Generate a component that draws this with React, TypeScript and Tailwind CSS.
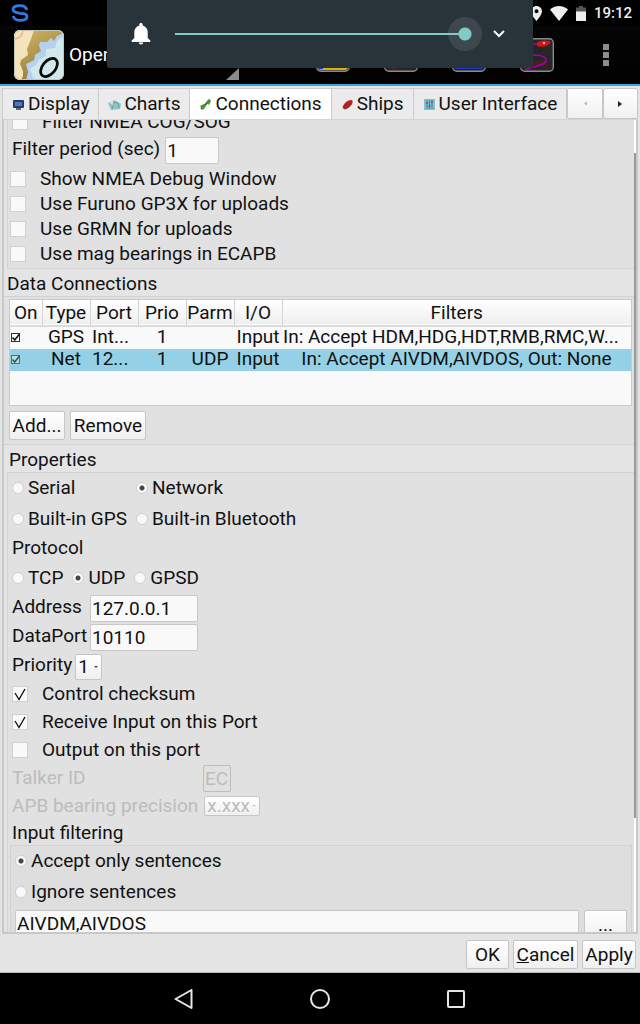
import clsx from "clsx";
import type { ReactNode } from "react";

const connections = [
  { type: "GPS", port: "Int...", prio: "1", parm: "", io: "Input", filters: "In: Accept HDM,HDG,HDT,RMB,RMC,W..." },
  { type: "Net", port: "12...", prio: "1", parm: "UDP", io: "Input", filters: "In: Accept AIVDM,AIVDOS, Out: None" },
];

const raised = "rounded-xs border border-[#c6c6c6] bg-linear-to-b from-white to-[#f0f0f0]";
const field = "h-[27px] rounded-xs border border-[#c8c8c8] bg-[#f9f9f9] px-px";

function Check({ label, checked = false, className }: { label: string; checked?: boolean; className?: string }) {
  return (
    <label className={clsx("flex items-center gap-3.5", className)}>
      <span className="grid size-4">
        <input
          type="checkbox"
          defaultChecked={checked}
          className="peer col-start-1 row-start-1 size-4 appearance-none border border-[#d0d0d0] bg-[#f9f9f9]"
        />
        <svg viewBox="0 0 16 16" className="pointer-events-none invisible col-start-1 row-start-1 size-4 peer-checked:visible">
          <path d="M3 7l4 6.500L13 3" fill="none" stroke="#111" strokeWidth="1.400" />
        </svg>
      </span>
      {label}
    </label>
  );
}

function Radio({ name, label, checked = false, className }: { name: string; label: string; checked?: boolean; className?: string }) {
  return (
    <label className={clsx("flex items-center gap-1 whitespace-nowrap", className)}>
      <input
        type="radio"
        name={name}
        defaultChecked={checked}
        className="size-3 appearance-none rounded-full border border-[#cfcfcf] bg-[#f9f9f9] checked:bg-[radial-gradient(circle,#444_0_2px,#f9f9f9_3px)]"
      />
      {label}
    </label>
  );
}

function RowCheck({ label, tinted = false }: { label: string; tinted?: boolean }) {
  return (
    <label className="grid size-[10px]">
      <input
        type="checkbox"
        defaultChecked
        aria-label={label}
        className={clsx(
          "peer col-start-1 row-start-1 size-[9px] appearance-none border",
          tinted ? "border-[#49707d] bg-[#b9dce8]" : "border-[#333] bg-white",
        )}
      />
      <svg viewBox="0 0 10 10" className="pointer-events-none invisible col-start-1 row-start-1 size-[10px] peer-checked:visible">
        <path d="M1.500 4.500l2.200 2.500L8.500 1" fill="none" stroke={tinted ? "#36525c" : "#111"} strokeWidth="1.500" />
      </svg>
    </label>
  );
}

function Tab({ label, active = false, children }: { label: string; active?: boolean; children: ReactNode }) {
  return (
    <button
      type="button"
      role="tab"
      aria-selected={active}
      className={clsx(
        "flex items-center gap-[3px] border-t border-r border-[#cccccc] px-[9px] whitespace-nowrap",
        active ? "bg-white" : "bg-[#ebebeb]",
      )}
    >
      <svg viewBox="0 0 13 13" className="size-[13px]">
        {children}
      </svg>
      {label}
    </button>
  );
}

function ChartLogo() {
  return (
    <svg viewBox="0 0 50 50" className="size-[50px]">
      <defs>
        <linearGradient id="land" x1="0" y1="0" x2=".6" y2="1">
          <stop offset="0" stopColor="#d7bb6b" />
          <stop offset="1" stopColor="#8f7833" />
        </linearGradient>
        <clipPath id="tile">
          <rect width="50" height="50" rx="6" />
        </clipPath>
      </defs>
      <g clipPath="url(#tile)">
        <rect width="50" height="50" fill="#d2e9ec" />
        <path d="M50 0v6l-7 5-2 7-9 1v7l-7 3-2 5-7 5 2 5 2 6H0V0z" fill="#b5d0f0" />
        <path d="M50 0l-3 4-4 2-3 5-3-3-4 4-7 0-1 4 2 5-6 4-1 5-8 4 2 8-2 8H0V0z" fill="url(#land)" />
        <path d="M20 0l-3 9-4 10 1 6-7 5-1 4 3 7v5l-2 4H0V0z" fill="#f3e4bd" />
        <path d="M0 9c5 0 9-4 9-9" fill="none" stroke="#f0b49c" strokeWidth="1.500" />
        <ellipse cx="35" cy="37.500" rx="6.500" ry="10.500" transform="rotate(40 35 37.500)" fill="none" stroke="#0a0a0a" strokeWidth="2.700" />
      </g>
      <rect x=".5" y=".5" width="49" height="49" rx="6" fill="none" stroke="#c9c4b4" />
    </svg>
  );
}

function ToolTile({ children }: { children: ReactNode }) {
  return (
    <button type="button" className="size-[34px]">
      <svg viewBox="0 0 34 34" className="size-[34px]">
        <rect x=".7" y=".7" width="32.600" height="32.600" rx="4" fill="#262626" stroke="#8a8a8a" strokeWidth="1.400" />
        {children}
      </svg>
    </button>
  );
}

function VolumePanel() {
  return (
    <div className="absolute top-0 left-1/2 flex h-[68px] w-[426px] -translate-x-1/2 items-center rounded-b-xs bg-[#29333a] pr-7 pl-6">
      <svg viewBox="0 0 20 22" className="h-[22px] w-5 fill-white">
        <path d="M10 0c1 0 1.700.7 1.700 1.600v.9c3 .8 5 3.400 5 6.500v6l2.600 2.500V19H.7v-1.500L3.300 15V9c0-3.100 2-5.700 5-6.500v-.9C8.300.7 9 0 10 0zM7.800 19.500h4.400c0 1.300-1 2-2.200 2s-2.200-.7-2.200-2z" />
      </svg>
      <label className="ml-6 flex-1">
        <span className="sr-only">Volume</span>
        <input
          type="range"
          defaultValue={100}
          className="block h-[34px] w-full appearance-none bg-[linear-gradient(#80cbc4,#80cbc4)] bg-size-[calc(100%-17px)_2px] bg-left bg-no-repeat [&::-webkit-slider-thumb]:size-[34px] [&::-webkit-slider-thumb]:appearance-none [&::-webkit-slider-thumb]:rounded-full [&::-webkit-slider-thumb]:bg-[linear-gradient(#80cbc4,#80cbc4),radial-gradient(circle,#80cbc4_0_6px,#3d474d_7px)] [&::-webkit-slider-thumb]:bg-size-[14px_2px,100%_100%] [&::-webkit-slider-thumb]:bg-left [&::-webkit-slider-thumb]:bg-no-repeat"
        />
      </label>
      <button type="button" aria-label="Expand" className="ml-[11px]">
        <svg viewBox="0 0 12 8" className="h-2 w-3">
          <path d="M1 1l5 5 5-5" fill="none" stroke="#fff" strokeWidth="2" />
        </svg>
      </button>
    </div>
  );
}

function TopBars() {
  return (
    <header className="relative border-b-2 border-[#2fa8d8] bg-black text-white">
      <div className="flex h-[26px] items-center justify-between pr-2 pl-[11px]">
        <svg viewBox="0 0 18 18" className="size-[18px]" fill="none" stroke="#3478e5" strokeWidth="2.800">
          <path d="M15.800 6C15 3 12.500 1.600 9 1.600 5 1.600 2 3 2 5.500c0 2 2 2.700 5 3.300l5 1.200" />
          <path d="M2.200 12c.8 3 3.300 4.400 6.800 4.400 4 0 7-1.400 7-3.900 0-2-2-2.700-5-3.300" />
        </svg>
        <div className="flex items-center">
          <svg viewBox="0 0 11 15" className="h-[15px] w-[11px]">
            <path d="M5.500 0C2.500 0 0 2.300 0 5.300 0 9 5.500 15 5.500 15S11 9 11 5.300C11 2.300 8.500 0 5.500 0zm0 7.300a2 2 0 110-4 2 2 0 010 4z" fill="#eee" />
          </svg>
          <svg viewBox="0 0 18 15" className="ml-2 h-[15px] w-[18px]">
            <path d="M9 15L0 3.500C2.500 1.200 5.500 0 9 0s6.500 1.200 9 3.500z" fill="#eee" />
          </svg>
          <svg viewBox="0 0 10 15" className="ml-2 h-[15px] w-[10px]">
            <path d="M3 0h4v1.500h3V6H0V1.500h3z" fill="#555" />
            <path d="M0 5.500h10V15H0z" fill="#eee" />
          </svg>
          <span className="ml-2 text-[15px] font-medium text-[#eee]">19:12</span>
        </div>
      </div>
      <div className="flex h-[58px] items-center bg-linear-to-b from-[#050505] to-[#010101] pl-[14px]">
        <ChartLogo />
        <h1 className="ml-[5px] w-[157px]">OpenCPN</h1>
        <svg viewBox="0 0 13 12" className="mb-[-38px] h-3 w-[13px]">
          <path d="M13 0v12H0z" fill="#8a8a8a" />
        </svg>
        <div className="ml-auto flex items-center gap-[34px] pr-[49px]">
          <ToolTile>
            <path d="M2 20h30v9q0 3-3 3H5q-3 0-3-3z" fill="#e0b000" />
            <path d="M1 27h6v4H3z" fill="#1d2fd0" />
          </ToolTile>
          <ToolTile>
            <circle cx="10" cy="30" r="1" fill="#c01010" />
          </ToolTile>
          <ToolTile>
            <path d="M3 29h28v2H3z" fill="#1e35c8" />
          </ToolTile>
          <ToolTile>
            <path d="M10 23h17v4H10z" fill="#55181a" />
            <path d="M11 7l8-2M5 32c8-4 21-4 21-10 0-4-8-5-15-5" fill="none" stroke="#a000a8" strokeWidth="1.500" />
            <path d="M17 5c3-3 10-3 14-1-2 4-9 6-14 4z" fill="#d41515" />
            <circle cx="24" cy="5" r="1" fill="#fff" />
          </ToolTile>
        </div>
        <button type="button" aria-label="More options" className="mr-[31px] grid gap-[2px]">
          <span className="size-[6px] bg-[#8c8c8c]" />
          <span className="size-[6px] bg-[#8c8c8c]" />
          <span className="size-[6px] bg-[#8c8c8c]" />
        </button>
      </div>
      <VolumePanel />
    </header>
  );
}

function Tabs() {
  return (
    <div role="tablist" className="mx-[2px] mt-[2px] flex h-[31px] border-l border-[#cccccc]">
      <Tab label="Display">
        <rect x="1" y="2" width="11" height="8" rx="1" fill="#283a70" />
        <rect x="3" y="4" width="7" height="4" fill="#5577bb" />
        <rect x="4" y="10" width="5" height="2" fill="#666" />
      </Tab>
      <Tab label="Charts">
        <path d="M0 5l3-1 3-2 4 2 3 2-1 5-9 1z" fill="#8fc3cf" />
        <path d="M2 5l3-2 1 5z" fill="#eee6b8" />
        <path d="M4 11l2-7 4 1 1 5" fill="none" stroke="#5596a5" strokeWidth=".8" />
      </Tab>
      <Tab label="Connections" active>
        <path d="M2 11l9-9" stroke="#555" strokeWidth="2" />
        <path d="M1 8l4-2 2 2-3 4zM7 4l3-3 2 2-2 4z" fill="#3f9a2c" />
      </Tab>
      <Tab label="Ships">
        <path d="M2 8c2-4 5-6 8-6 2 0 2 2 1 4-2 3-5 5-7 5-2 0-3-1-2-3z" fill="#c21d1d" />
        <path d="M3 11c3 0 6-3 8-6" fill="none" stroke="#6a4040" />
      </Tab>
      <Tab label="User Interface">
        <rect x="1" y="1" width="11" height="11" fill="#79c3d6" />
        <path d="M4 2v9M6.500 2v9M9 2v9" stroke="#2f6475" strokeWidth=".7" />
        <path d="M3 5h2M5.500 8h2M8 4h2" stroke="#c33" strokeWidth="1.500" />
      </Tab>
      <button type="button" aria-label="Previous tabs" className={clsx(raised, "grid flex-1 place-items-center")}>
        <svg viewBox="0 0 4 6" className="h-[5px] w-[3px] fill-[#bbb]">
          <path d="M4 0v6L0 3z" />
        </svg>
      </button>
      <button type="button" aria-label="Next tabs" className={clsx(raised, "grid flex-1 place-items-center")}>
        <svg viewBox="0 0 4 6" className="h-[6px] w-[4px] fill-[#222]">
          <path d="M0 0v6l4-3z" />
        </svg>
      </button>
    </div>
  );
}

function ConnectionsTable() {
  return (
    <div className="h-[107px] border border-[#cacaca] bg-[#f9f9f9]">
      <table className="w-full table-fixed text-center whitespace-nowrap">
        <colgroup>
          <col className="w-8" />
          <col className="w-12" />
          <col className="w-12" />
          <col className="w-12" />
          <col className="w-12" />
          <col className="w-12" />
          <col />
        </colgroup>
        <thead>
          <tr className="h-[26px] border-b-2 border-[#dcdcdc] bg-linear-to-b from-white to-[#efefef]">
            {["On", "Type", "Port", "Prio", "Parm", "I/O", "Filters"].map((h) => (
              <th key={h} className="border-r border-[#d4d4d4] p-0 leading-[22px] font-normal last:border-r-0">
                {h}
              </th>
            ))}
          </tr>
        </thead>
        <tbody>
          {connections.map((c, i) => (
            <tr key={c.type} className={clsx("h-[22px] leading-5", i === 1 && "bg-[#94d1e6]")}>
              <td className="p-0 pl-px">
                <RowCheck label={`Enable ${c.type}`} tinted={i === 1} />
              </td>
              <td className="p-0 pb-[2px]">{c.type}</td>
              <td className="p-0 pb-[2px] pl-[2px] text-left">{c.port}</td>
              <td className="p-0 pb-[2px]">{c.prio}</td>
              <td className="p-0 pb-[2px]">{c.parm}</td>
              <td className="p-0 pb-[2px]">{c.io}</td>
              <td className={clsx("p-0 pb-[2px]", c.filters.endsWith("...") && "pl-px text-left")}>{c.filters}</td>
            </tr>
          ))}
        </tbody>
      </table>
    </div>
  );
}

export default function App() {
  return (
    <div className="flex h-screen flex-col overflow-hidden bg-[#e4e4e4] font-['Roboto',sans-serif] text-[19px] leading-6 text-[#111]">
      <TopBars />
      <Tabs />
      <main className="mx-[2px] flex min-h-0 flex-1 overflow-hidden border-t border-r-2 border-b-2 border-l-2 border-[#c8c8c8] border-t-[#d4d4d4]">
        <div className="min-w-0 flex-1">
          <section className="-mt-3 ml-[3px] border-b border-l border-[#d2d2d2] bg-[#e1e1e1]">
            <Check label="Filter NMEA COG/SOG" className="h-[27px] pl-1" />
            <div className="flex h-[31px] gap-[5px] pt-[2px] pl-1">
              <label htmlFor="period">Filter period (sec)</label>
              <input id="period" defaultValue="1" className={clsx(field, "w-[54px]")} />
            </div>
            <Check label="Show NMEA Debug Window" className="h-[25px] pl-[2px]" />
            <Check label="Use Furuno GP3X for uploads" className="h-[25px] pl-[2px]" />
            <Check label="Use GRMN for uploads" className="h-[25px] pl-[2px]" />
            <Check label="Use mag bearings in ECAPB" className="h-[27px] pb-[2px] pl-[2px]" />
          </section>

          <h2 className="h-[27px] pt-[3px] pl-[3px]">Data Connections</h2>
          <section className="border-y border-[#d2d2d2] bg-[#e1e1e1] pt-[2px] pr-[2px] pb-1 pl-[5px]">
            <ConnectionsTable />
            <div className="mt-[5px] flex gap-[5px]">
              <button type="button" className={clsx(raised, "h-[29px] w-14")}>
                Add...
              </button>
              <button type="button" className={clsx(raised, "h-[29px] w-[76px]")}>
                Remove
              </button>
            </div>
          </section>

          <h2 className="h-[27px] pt-[3px] pl-[5px]">Properties</h2>
          <section className="ml-[3px] border-t border-l border-[#d2d2d2] bg-[#e1e1e1] pl-1">
            <div className="grid w-max grid-cols-[124px_auto]">
              <Radio name="kind" label="Serial" className="h-[30px]" />
              <Radio name="kind" label="Network" checked className="h-[30px]" />
              <Radio name="kind" label="Built-in GPS" className="h-[31px]" />
              <Radio name="kind" label="Built-in Bluetooth" className="h-[31px]" />
            </div>
            <h3 className="h-7 pt-[2px]">Protocol</h3>
            <div className="flex h-[31px] gap-[9px]">
              <Radio name="protocol" label="TCP" />
              <Radio name="protocol" label="UDP" checked />
              <Radio name="protocol" label="GPSD" />
            </div>
            <div className="flex h-[29px] items-end">
              <label htmlFor="address" className="w-[78px] pb-[3px]">Address</label>
              <input id="address" defaultValue="127.0.0.1" className={clsx(field, "w-[108px]")} />
            </div>
            <div className="flex h-[29px] items-end">
              <label htmlFor="dataport" className="w-[78px] pb-[3px]">DataPort</label>
              <input id="dataport" defaultValue="10110" className={clsx(field, "w-[108px]")} />
            </div>
            <div className="flex h-[29px] items-end gap-[3px]">
              <label htmlFor="priority" className="pb-[3px]">Priority</label>
              <span className="grid items-center">
                <select id="priority" className={clsx(raised, "col-start-1 row-start-1 h-[26px] w-[27px] appearance-none pl-[2px]")}>
                  <option>1</option>
                </select>
                <svg viewBox="0 0 4 2" className="pointer-events-none col-start-1 row-start-1 mr-1 h-[2px] w-1 justify-self-end fill-[#444]">
                  <path d="M0 0h4L2 2z" />
                </svg>
              </span>
            </div>
            <Check label="Control checksum" checked className="h-7" />
            <Check label="Receive Input on this Port" checked className="h-7" />
            <Check label="Output on this port" className="h-7" />
            <div className="flex h-7 items-center text-[#bcbcbc]">
              <label htmlFor="talker" className="w-[191px]">Talker ID</label>
              <input id="talker" disabled defaultValue="EC" className="h-[27px] w-7 rounded-xs border border-[#bdbdbd] px-px" />
            </div>
            <div className="flex h-7 items-center gap-[6px] text-[#bcbcbc]">
              <label htmlFor="precision">APB bearing precision</label>
              <span className="grid items-center">
                <select
                  id="precision"
                  disabled
                  className={clsx(raised, "col-start-1 row-start-1 h-5 w-[56px] appearance-none pr-2 pl-[2px] leading-[18px] opacity-100")}
                >
                  <option>x.xxx</option>
                </select>
                <svg viewBox="0 0 4 2" className="pointer-events-none col-start-1 row-start-1 mr-1 h-[2px] w-1 justify-self-end fill-[#ccc]">
                  <path d="M0 0h4L2 2z" />
                </svg>
              </span>
            </div>
            <h3 className="h-[25px] pt-px">Input filtering</h3>
            <div className="mr-[2px] -ml-[2px] border-x border-t border-[#d2d2d2] bg-[#dedede] px-1">
              <Radio name="filtering" label="Accept only sentences" checked className="h-[30px]" />
              <Radio name="filtering" label="Ignore sentences" className="h-[31px]" />
              <div className="flex gap-[5px] pt-[3px]">
                <input aria-label="Sentences" defaultValue="AIVDM,AIVDOS" className={clsx(field, "min-w-0 flex-1")} />
                <button type="button" className={clsx(raised, "h-[29px] w-[43px]")}>
                  ...
                </button>
              </div>
            </div>
          </section>
        </div>
        <div className="w-[2px] bg-white pt-[33px]">
          <div className="h-[665px] bg-[#999999]" />
        </div>
      </main>
      <footer className="flex h-[39px] items-end justify-end gap-1 border-b border-[#bbbbbb] pr-1 pb-[3px]">
        <button type="button" className={clsx(raised, "h-[29px] w-[43px]")}>
          OK
        </button>
        <button type="button" className={clsx(raised, "h-[29px] w-[65px]")}>
          <span className="underline">C</span>ancel
        </button>
        <button type="button" className={clsx(raised, "h-[29px] w-[54px]")}>
          Apply
        </button>
      </footer>
      <nav className="flex h-[51px] items-center justify-center gap-[116px] bg-black">
        <button type="button" aria-label="Back">
          <svg viewBox="0 0 20 20" className="size-5">
            <path d="M17.500 1v18L1.500 10z" fill="none" stroke="#e6e6e6" strokeWidth="2" strokeLinejoin="round" />
          </svg>
        </button>
        <button type="button" aria-label="Home">
          <svg viewBox="0 0 20 20" className="size-5">
            <circle cx="10" cy="10" r="9" fill="none" stroke="#e6e6e6" strokeWidth="2" />
          </svg>
        </button>
        <button type="button" aria-label="Recent apps">
          <svg viewBox="0 0 20 20" className="size-5">
            <rect x="2" y="2" width="16" height="16" rx="1" fill="none" stroke="#e6e6e6" strokeWidth="2" />
          </svg>
        </button>
      </nav>
    </div>
  );
}
